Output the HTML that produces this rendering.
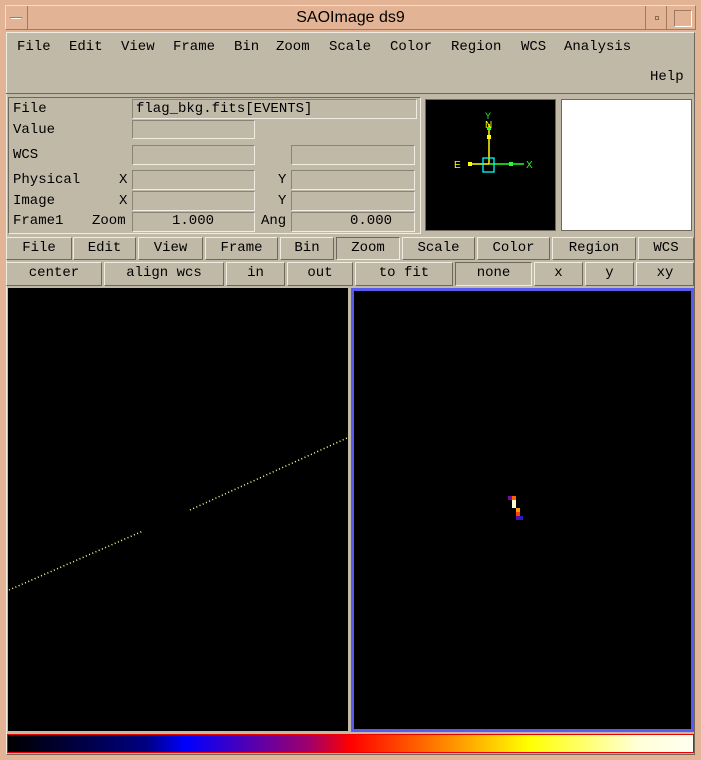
<!DOCTYPE html>
<html><head><meta charset="utf-8"><style>
*{margin:0;padding:0;box-sizing:border-box}
body{width:701px;height:760px;background:#e2b394;position:relative;overflow:hidden;font-family:"Liberation Mono",monospace;font-size:14px;color:#000}
.a{position:absolute}
.t{position:absolute;white-space:pre;line-height:16px}
.f{position:absolute;background:#c0b9a8;border:1px solid;border-color:#8a8476 #f0ece2 #f0ece2 #8a8476}
.b{position:absolute;background:#c0b9a8;border:1px solid;border-color:#f0ece2 #6e685c #6e685c #f0ece2;text-align:center;line-height:20px;white-space:pre}
.s{border-color:#6e685c #f0ece2 #f0ece2 #6e685c}
</style></head><body>
<div class="a" style="left:5px;top:5px;width:691px;height:25px;border:1px solid;border-color:#f6dcc8 #a07a60 #a07a60 #f6dcc8"></div>
<div class="a" style="left:6px;top:6px;width:22px;height:23px;border-right:1px solid #a07a60"></div>
<div class="a" style="left:10px;top:17px;width:12px;height:2px;border:1px solid #a07a60;border-bottom-color:#fff"></div>
<div class="a" style="left:645px;top:6px;width:22px;height:23px;border-left:1px solid #a07a60;border-right:1px solid #a07a60"></div>
<div class="a" style="left:655px;top:16px;width:4px;height:4px;border:1px solid #8a6a50"></div>
<div class="a" style="left:674px;top:10px;width:18px;height:17px;border:1px solid;border-color:#a07a60 #fff #fff #a07a60"></div>
<div class="t" style="left:0;width:701px;text-align:center;top:10px;font-family:'Liberation Sans',sans-serif;font-size:16px">SAOImage ds9</div>
<div class="a" style="left:6px;top:32px;width:689px;height:723px;background:#c0b9a8;border:1px solid;border-color:#f0ece2 #6e685c #6e685c #f0ece2"></div>
<div class="t" style="left:17px;top:39px">File</div>
<div class="t" style="left:69px;top:39px">Edit</div>
<div class="t" style="left:121px;top:39px">View</div>
<div class="t" style="left:173px;top:39px">Frame</div>
<div class="t" style="left:234px;top:39px">Bin</div>
<div class="t" style="left:276px;top:39px">Zoom</div>
<div class="t" style="left:329px;top:39px">Scale</div>
<div class="t" style="left:390px;top:39px">Color</div>
<div class="t" style="left:451px;top:39px">Region</div>
<div class="t" style="left:521px;top:39px">WCS</div>
<div class="t" style="left:564px;top:39px">Analysis</div>
<div class="t" style="left:650px;top:69px">Help</div>
<div class="a" style="left:6px;top:93px;width:689px;height:1px;background:#6e685c"></div>
<div class="a" style="left:8px;top:97px;width:413px;height:137px;border:1px solid;border-color:#6e685c #f0ece2 #f0ece2 #6e685c"></div>
<div class="t" style="left:13px;top:101px">File</div>
<div class="t" style="left:13px;top:122px">Value</div>
<div class="t" style="left:13px;top:147px">WCS</div>
<div class="t" style="left:13px;top:172px">Physical</div>
<div class="t" style="left:13px;top:193px">Image</div>
<div class="t" style="left:13px;top:213px">Frame1</div>
<div class="t" style="left:119px;top:172px">X</div>
<div class="t" style="left:119px;top:193px">X</div>
<div class="t" style="left:92px;top:213px">Zoom</div>
<div class="t" style="left:278px;top:172px">Y</div>
<div class="t" style="left:278px;top:193px">Y</div>
<div class="t" style="left:261px;top:213px">Ang</div>
<div class="f" style="left:132px;top:99px;width:285px;height:20px"></div>
<div class="t" style="left:136px;top:101px">flag_bkg.fits[EVENTS]</div>
<div class="f" style="left:132px;top:120px;width:123px;height:19px"></div>
<div class="f" style="left:132px;top:145px;width:123px;height:20px"></div>
<div class="f" style="left:291px;top:145px;width:124px;height:20px"></div>
<div class="f" style="left:132px;top:170px;width:123px;height:20px"></div>
<div class="f" style="left:291px;top:170px;width:124px;height:20px"></div>
<div class="f" style="left:132px;top:191px;width:123px;height:20px"></div>
<div class="f" style="left:291px;top:191px;width:124px;height:20px"></div>
<div class="f" style="left:132px;top:212px;width:123px;height:20px"></div>
<div class="f" style="left:291px;top:212px;width:124px;height:20px"></div>
<div class="t" style="left:172px;top:213px">1.000</div>
<div class="t" style="left:350px;top:213px">0.000</div>
<div class="a" style="left:425px;top:99px;width:131px;height:132px;background:#000;border:1px solid #6e685c"></div>
<svg class="a" style="left:426px;top:100px" width="129" height="130">
<line x1="63" y1="24" x2="63" y2="64" stroke="#ff0" stroke-width="1.5"/>
<line x1="44" y1="64" x2="63" y2="64" stroke="#ff0" stroke-width="1.5"/>
<line x1="63" y1="64" x2="98" y2="64" stroke="#2f2" stroke-width="1.5"/>
<rect x="57" y="58" width="11" height="14" fill="none" stroke="#0ff" stroke-width="1.3"/>
<rect x="61" y="35" width="4" height="4" fill="#ff0"/>
<rect x="61" y="27" width="4" height="3" fill="#2f2"/>
<rect x="42" y="62" width="4" height="4" fill="#ff0"/>
<rect x="83" y="62" width="4" height="4" fill="#2f2"/>
<text x="59" y="28" fill="#ff0" font-family="Liberation Sans" font-size="10">N</text>
<text x="59" y="19" fill="#2f2" font-family="Liberation Sans" font-size="9">Y</text>
<text x="28" y="68" fill="#ff0" font-family="Liberation Sans" font-size="10">E</text>
<text x="100" y="68" fill="#2f2" font-family="Liberation Sans" font-size="10">X</text>
</svg>
<div class="a" style="left:561px;top:99px;width:131px;height:132px;background:#fff;border:1px solid #6e685c"></div>
<div class="b" style="left:6px;top:237px;width:66px;height:23px">File</div>
<div class="b" style="left:73px;top:237px;width:63px;height:23px">Edit</div>
<div class="b" style="left:138px;top:237px;width:65px;height:23px">View</div>
<div class="b" style="left:205px;top:237px;width:73px;height:23px">Frame</div>
<div class="b" style="left:280px;top:237px;width:54px;height:23px">Bin</div>
<div class="b s" style="left:336px;top:237px;width:64px;height:23px">Zoom</div>
<div class="b" style="left:402px;top:237px;width:73px;height:23px">Scale</div>
<div class="b" style="left:477px;top:237px;width:73px;height:23px">Color</div>
<div class="b" style="left:552px;top:237px;width:84px;height:23px">Region</div>
<div class="b" style="left:638px;top:237px;width:56px;height:23px">WCS</div>
<div class="b" style="left:6px;top:262px;width:96px;height:24px">center</div>
<div class="b" style="left:104px;top:262px;width:120px;height:24px">align wcs</div>
<div class="b" style="left:226px;top:262px;width:59px;height:24px">in</div>
<div class="b" style="left:287px;top:262px;width:66px;height:24px">out</div>
<div class="b" style="left:355px;top:262px;width:98px;height:24px">to fit</div>
<div class="b s" style="left:455px;top:262px;width:77px;height:24px">none</div>
<div class="b" style="left:534px;top:262px;width:49px;height:24px">x</div>
<div class="b" style="left:585px;top:262px;width:49px;height:24px">y</div>
<div class="b" style="left:636px;top:262px;width:58px;height:24px">xy</div>
<div class="a" style="left:8px;top:288px;width:340px;height:443px;background:#000"></div>
<svg class="a" style="left:7px;top:288px" width="341" height="444">
<line x1="2" y1="302" x2="136" y2="243" stroke="#ffff99" stroke-width="1.5" stroke-dasharray="1 2.5"/>
<line x1="183" y1="222" x2="340" y2="150" stroke="#ffff99" stroke-width="1.5" stroke-dasharray="1 2.5"/>
</svg>
<div class="a" style="left:351px;top:288px;width:343px;height:444px;background:#000;border:3px solid #5a5aee"></div>
<div class="a" style="left:508px;top:496px;width:4px;height:4px;background:#7010a0"></div>
<div class="a" style="left:512px;top:496px;width:4px;height:4px;background:#ff6000"></div>
<div class="a" style="left:512px;top:500px;width:4px;height:8px;background:#fffbd0"></div>
<div class="a" style="left:516px;top:508px;width:4px;height:4px;background:#ff9a00"></div>
<div class="a" style="left:516px;top:512px;width:4px;height:4px;background:#ff4000"></div>
<div class="a" style="left:516px;top:516px;width:4px;height:4px;background:#5010b0"></div>
<div class="a" style="left:520px;top:516px;width:3px;height:4px;background:#2020c0"></div>
<div class="a" style="left:7px;top:734px;width:687px;height:19px;border:1px solid #e00;background:linear-gradient(to right,#000 0%,#000080 20%,#0000ff 26%,#a0006a 44%,#ff0000 50%,#ff8000 63%,#ffff00 76%,#ffffd8 92%,#fffff0 100%)"></div>
</body></html>
